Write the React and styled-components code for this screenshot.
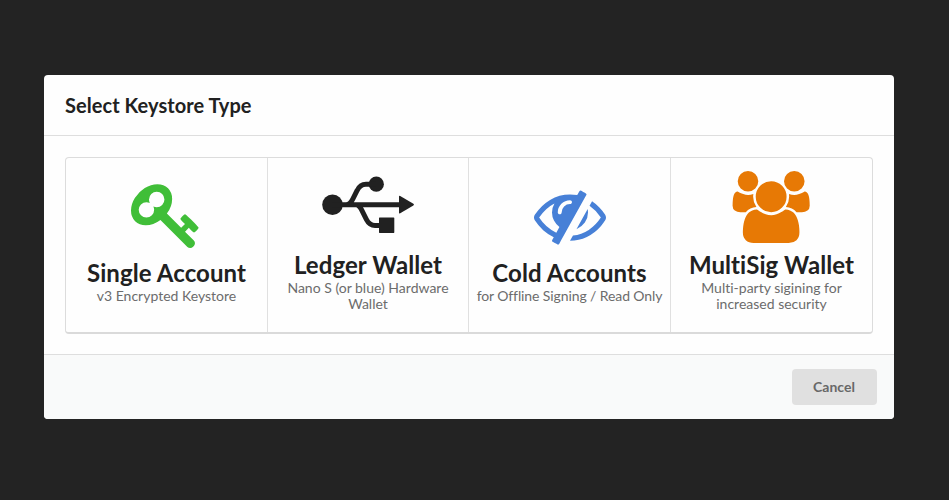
import React from "react";
import styled, { createGlobalStyle } from "styled-components";

const GlobalStyle = createGlobalStyle`
  *, *::before, *::after { box-sizing: border-box; }
  body {
    margin: 0;
    background: #232323;
    color: #212121;
    font-family: Lato, "Liberation Sans", sans-serif;
    font-variant-ligatures: none;
    overflow: hidden;
  }
`;

const Dimmer = styled.main`
  height: 500px;
  padding: 75px 55px 0 44px;
`;

const Modal = styled.section`
  display: flex;
  flex-direction: column;
  height: 344px;
  background: #fefefe;
  border-radius: 4px;
  overflow: hidden;
`;

const ModalHeader = styled.header`
  flex: 0 0 61px;
  display: flex;
  align-items: center;
  padding: 0 21px;
  border-bottom: 1px solid #dedede;
`;

const Title = styled.h1`
  margin: 0;
  font-size: 20px;
  line-height: 26px;
  font-weight: 700;
  letter-spacing: 0.05px;
`;

const ModalContent = styled.div`
  flex: 1;
  min-height: 0;
  padding: 21px;
`;

const Options = styled.div`
  display: grid;
  grid-template-columns: 202px 201px 202px 201px;
  height: 177px;
  border: 1px solid #dcdcdc;
  border-bottom: 2px solid #dadada;
  border-radius: 4px;
`;

const Option = styled.button`
  display: flex;
  flex-direction: column;
  align-items: center;
  justify-content: center;
  min-width: 0;
  padding: 0 5px 7px;
  border: 0;
  border-right: 1px solid #e0e0e0;
  background: transparent;
  color: inherit;
  font: inherit;
  font-variant-ligatures: none;
  text-align: center;

  &:last-child { border-right: 0; }
`;

const IconSlot = styled.span`
  display: flex;
  align-items: center;
  justify-content: center;
  height: 72px;
  margin-bottom: 6px;
  color: ${({ $color }) => $color};

  svg { display: block; fill: currentColor; }
`;

const OptionTitle = styled.span`
  font-size: 24px;
  line-height: 31px;
  font-weight: 700;
  letter-spacing: 0.08px;
  white-space: nowrap;
`;

const OptionNote = styled.span`
  width: ${({ $width }) => $width}px;
  font-size: 14px;
  line-height: 16px;
  letter-spacing: ${({ $tracking = 0 }) => $tracking}px;
  color: #6c6c6c;
`;

const Actions = styled.footer`
  flex: 0 0 65px;
  display: flex;
  justify-content: flex-end;
  padding: 14px 17px;
  border-top: 1px solid #dedede;
  background: #f9fafa;
`;

const CancelButton = styled.button`
  width: 85px;
  height: 36px;
  padding: 0 1px 1px 0;
  border: 0;
  border-radius: 4px;
  background: #e0e0e0;
  color: #686868;
  font: 700 14px/14px Lato, "Liberation Sans", sans-serif;
`;

const KeyIcon = () => (
  <svg width="72" height="72" viewBox="0 0 1792 1792" aria-hidden="true">
    <path d="M832 512q0-80-56-136t-136-56-136 56-56 136q0 42 19 83-41-19-83-19-80 0-136 56t-56 136 56 136 136 56 136-56 56-136q0-42-19-83 41 19 83 19 80 0 136-56t56-136zm851 704q0 17-49 66t-66 49q-9 0-28.500-16t-36.500-33-38.500-40-24.500-26l-96 96 220 220q28 28 28 68 0 42-39 81t-81 39q-40 0-68-28l-671-671q-176 131-365 131-163 0-265.500-102.500t-102.500-265.500q0-160 95-313t248-248 313-95q163 0 265.500 102.500t102.500 265.500q0 189-131 365l355 355 96-96q-3-3-26-24.500t-40-38.500-33-36.500-16-28.500q0-17 49-66t66-49q13 0 23 10 6 6 46 44.500t82 79.500 86.500 86 73 78 28.500 41z" />
  </svg>
);

const UsbIcon = () => (
  <svg width="93" height="72" viewBox="0 2.300 93 72" aria-hidden="true">
    <circle cx="10.500" cy="36" r="10.300" />
    <circle cx="54.300" cy="15.500" r="7.600" />
    <path d="M77 28q0-1.300 1.200-.7l13.200 7.800q1.200.8 0 1.600l-13.200 7.900q-1.200.6-1.200-.7z" />
    <rect x="57" y="48.700" width="15.300" height="15.500" rx="0.600" />
    <path
      d="M10 36H79M24 36Q28 36 30.500 31L35 22Q38 15.500 44 15.500H54M34 36Q37 36 39.500 41L44.500 51Q47.500 56.800 53 56.800H60"
      fill="none"
      stroke="currentColor"
      strokeWidth="5"
    />
  </svg>
);

const EyeSlashIcon = () => (
  <svg width="72" height="72" viewBox="0 0 1792 1792" aria-hidden="true">
    <path d="M555 1335l78-141q-87-63-136-159t-49-203q0-121 61-225-229 117-381 353 167 258 427 375zm389-759q0-20-14-34t-34-14q-125 0-214.500 89.500t-89.500 214.500q0 20 14 34t34 14 34-14 14-34q0-86 61-147t147-61q20 0 34-14t14-34zm363-191q0 7-1 9-106 189-316 567t-315 566l-49 89q-10 16-28 16-12 0-134-70-16-10-16-28 0-12 44-87-143-65-263.500-173t-208.500-245q-20-31-20-69t20-69q153-235 380-371t496-136q89 0 180 17l54-97q10-16 28-16 5 0 18 6t31 15.500 33 18.500 31.500 18.500 19.500 11.500q16 10 16 27zm37 447q0 139-79 253.500t-209 164.500l280-502q8 45 8 84zm448 128q0 35-20 69-39 64-109 145-150 172-347.500 267t-419.500 95l74-132q212-18 392.500-137t301.500-307q-115-179-282-294l63-112q95 64 182.500 153t144.500 184q20 34 20 69z" />
  </svg>
);

const UsersIcon = () => (
  <svg width="82.300" height="72" viewBox="0 0 2048 1792" aria-hidden="true">
    <path d="M657 896q-162 5-265 128h-134q-82 0-138-40.500t-56-118.500q0-353 124-353 6 0 43.500 21t97.500 42.500 119 21.500q67 0 133-23-5 37-5 66 0 139 81 256zm1071 637q0 120-73 189.500t-194 69.500h-874q-121 0-194-69.500t-73-189.500q0-53 3.500-103.500t14-109 26.500-108.500 43-97.500 62-81 85.500-53.500 111.500-20q10 0 43 21.500t73 48 107 48 135 21.500 135-21.500 107-48 73-48 43-21.500q61 0 111.500 20t85.500 53.500 62 81 43 97.500 26.500 108.500 14 109 3.500 103.500zm-1024-1277q0 106-75 181t-181 75-181-75-75-181 75-181 181-75 181 75 75 181zm704 384q0 159-112.500 271.500t-271.500 112.500-271.500-112.500-112.500-271.500 112.500-271.500 271.500-112.500 271.500 112.500 112.500 271.500zm576 225q0 78-56 118.500t-138 40.500h-134q-103-123-265-128 81-117 81-256 0-29-5-66 66 23 133 23 59 0 119-21.500t97.500-42.500 43.500-21q124 0 124 353zm-128-609q0 106-75 181t-181 75-181-75-75-181 75-181 181-75 181 75 75 181z" />
  </svg>
);

const KEYSTORES = [
  { title: "Single Account", note: "v3 Encrypted Keystore", width: 180, color: "#40be38", Icon: KeyIcon },
  { title: "Ledger Wallet", note: "Nano S (or blue) Hardware Wallet", width: 180, color: "#212121", Icon: UsbIcon },
  { title: "Cold Accounts", note: "for Offline Signing / Read Only", width: 191, tracking: -0.1, color: "#4780d7", Icon: EyeSlashIcon },
  { title: "MultiSig Wallet", note: "Multi-party sigining for increased security", width: 160, color: "#e77905", Icon: UsersIcon },
];

export default function App() {
  return (
    <>
      <GlobalStyle />
      <Dimmer>
        <Modal role="dialog" aria-labelledby="keystore-title">
          <ModalHeader>
            <Title id="keystore-title">Select Keystore Type</Title>
          </ModalHeader>
          <ModalContent>
            <Options>
              {KEYSTORES.map(({ title, note, width, tracking, color, Icon }) => (
                <Option key={title} type="button">
                  <IconSlot $color={color}><Icon /></IconSlot>
                  <OptionTitle>{title}</OptionTitle>
                  <OptionNote $width={width} $tracking={tracking}>{note}</OptionNote>
                </Option>
              ))}
            </Options>
          </ModalContent>
          <Actions>
            <CancelButton type="button">Cancel</CancelButton>
          </Actions>
        </Modal>
      </Dimmer>
    </>
  );
}
